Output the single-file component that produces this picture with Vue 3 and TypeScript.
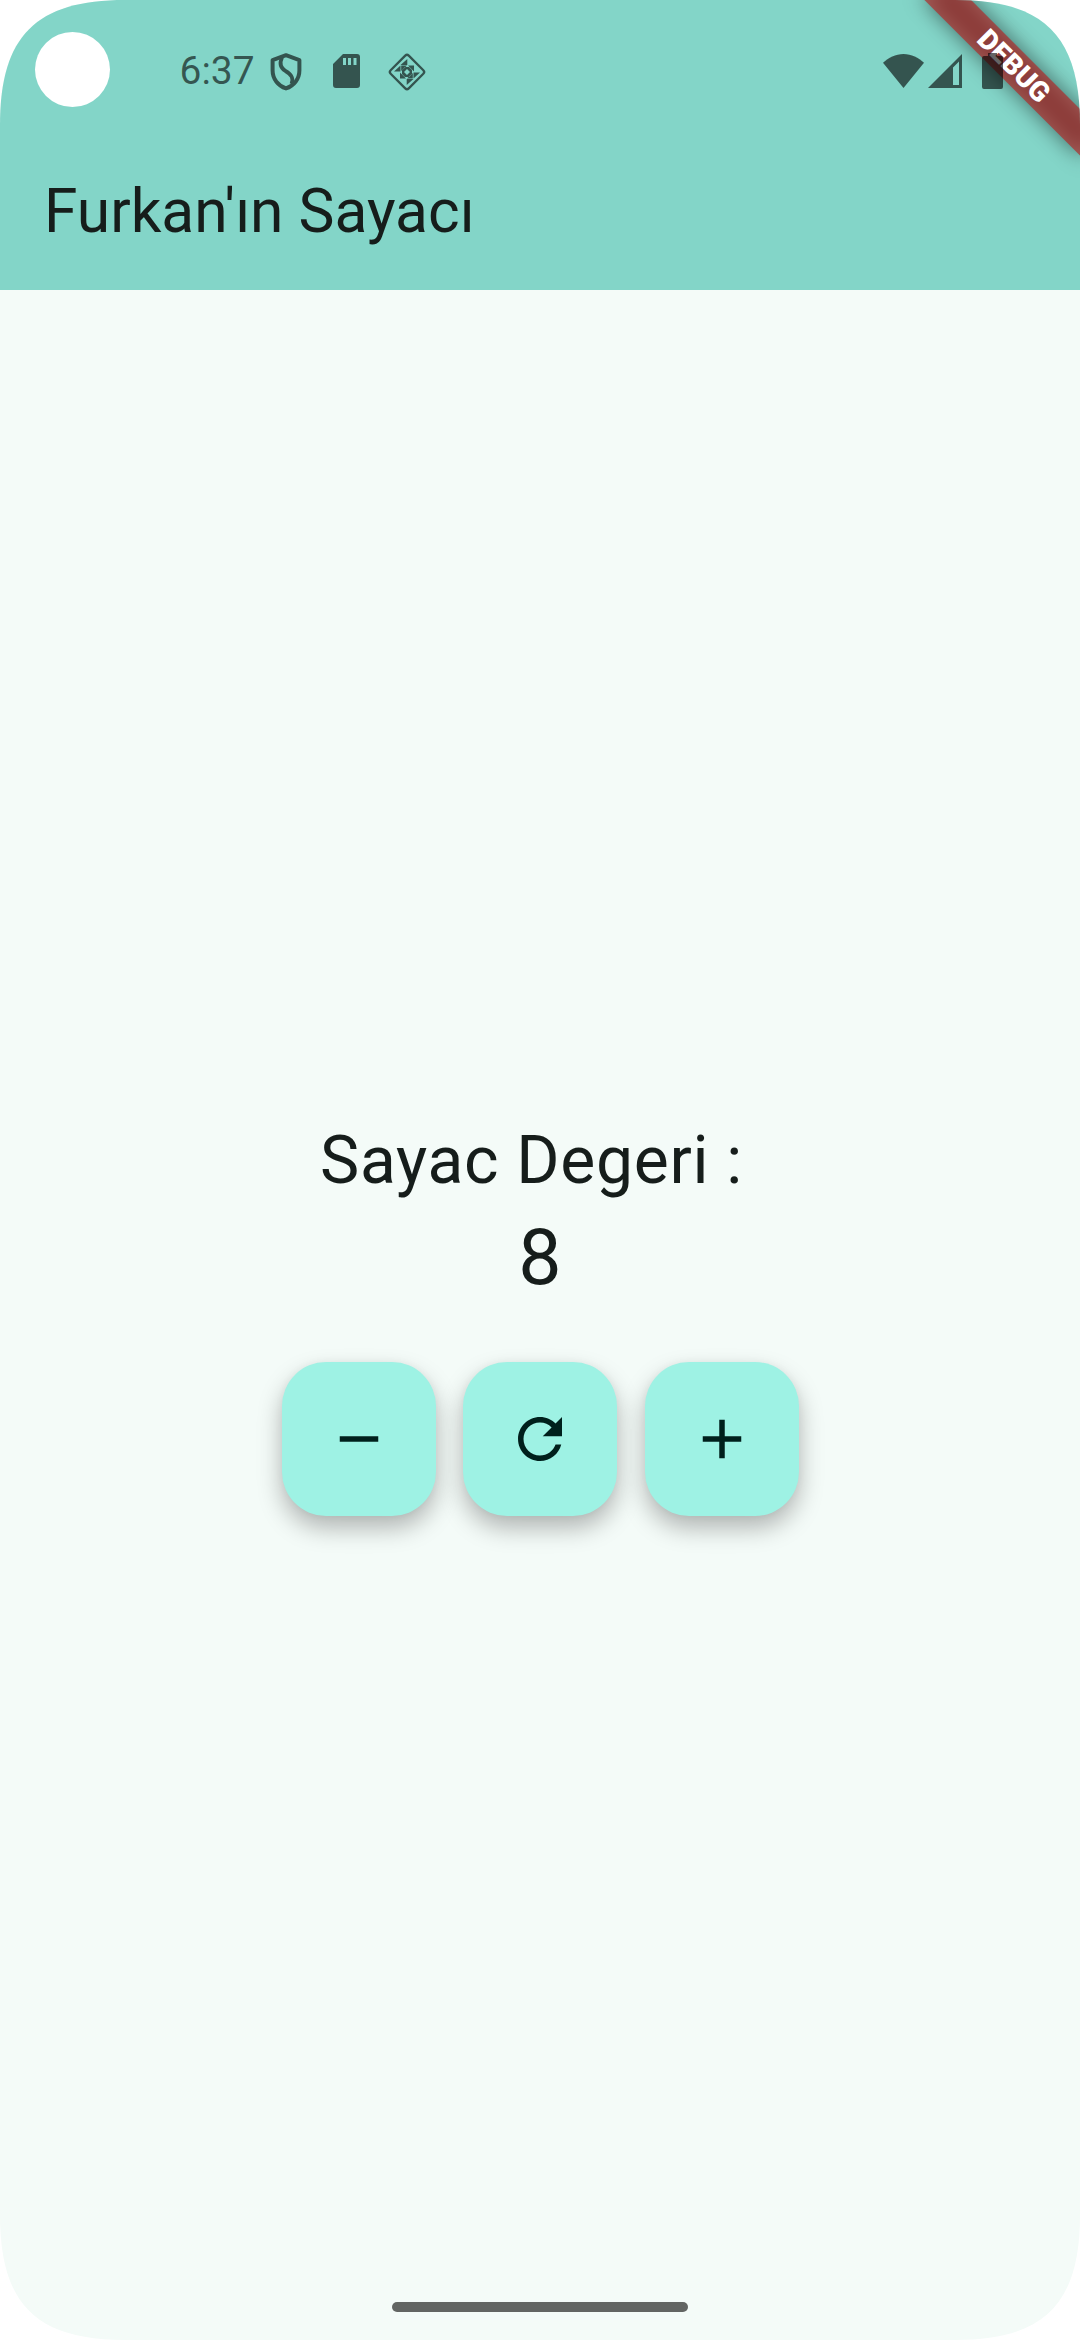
<script setup lang="ts">
import { ref } from 'vue'

const title = "Furkan'ın Sayacı"
const label = 'Sayac Degeri : '
const clock = '6:37'
const count = ref<number>(8)

interface Action {
  name: string
  path: string
  run: () => void
}

const actions: Action[] = [
  { name: 'Azalt', path: 'M19 13H5v-2h14v2z', run: () => { count.value-- } },
  {
    name: 'Sıfırla',
    path: 'M17.65 6.35C16.2 4.9 14.21 4 12 4c-4.42 0-7.99 3.58-7.99 8s3.57 8 7.99 8c3.73 0 6.84-2.55 7.73-6h-2.08c-.82 2.33-3.04 4-5.65 4-3.31 0-6-2.69-6-6s2.69-6 6-6c1.66 0 3.14.69 4.22 1.78L13 11h7V4l-2.35 2.35z',
    run: () => { count.value = 0 },
  },
  { name: 'Artır', path: 'M19 13h-6v6h-2v-6H5v-2h6V5h2v6h6v2z', run: () => { count.value++ } },
]
</script>

<template>
  <div class="screen">
    <header class="app-bar">
      <div class="status-bar">
        <span class="camera"></span>
        <span class="clock">{{ clock }}</span>
        <svg class="shield" width="32" height="38" viewBox="0 0 32 38">
          <path d="M16 2.2 L2.6 7.2 V17.5 C2.6 26 8.2 32.8 16 35.4 C23.8 32.8 29.4 26 29.4 17.5 V7.2 Z" fill="none" stroke="#000" stroke-width="4" stroke-linejoin="round" />
          <path d="M12 4.500 C9.2 10.500 10.500 14.8 15.500 18 C21.500 21.500 24 25 21.500 31" fill="none" stroke="#000" stroke-width="3.8" />
        </svg>
        <svg class="sd" width="27" height="34" viewBox="0 0 27 34">
          <path fill-rule="evenodd" d="M10 0H24Q27 0 27 3V31Q27 34 24 34H3Q0 34 0 31V10ZM10 4V11H13V4ZM15 4V11H18V4ZM20.500 4V11H23.500V4Z" />
        </svg>
        <svg class="diamond" width="40" height="40" viewBox="-20 -20 40 40">
          <rect x="-12.800" y="-12.800" width="25.600" height="25.600" rx="2.500" transform="rotate(45)" fill="none" stroke="#000" stroke-width="2.300" />
          <path fill-rule="evenodd" d="M0.300 -13V-7H-6.500ZM-6.500 -6.500V-0.500H-13ZM-5.800 -6.500H0L-5.800 -1ZM1 -6.500H7V-0.500ZM-0.300 13V7H6.500ZM6.500 6.500V0.500H13ZM5.800 6.500H0L5.800 1ZM-1 6.500H-7V0.500ZM-2 -5H2L5 -2V2L2 5H-2L-5 2V-2ZM0 -3L-3 0L0 3L3 0Z" />
        </svg>
        <span class="spacer"></span>
        <svg class="wifi" width="41" height="34" viewBox="0 0 41 34">
          <path d="M20.500 34L0 8.800C5.500 3.500 12.500 0 20.500 0S35.500 3.500 41 8.800Z" />
        </svg>
        <svg class="signal" width="34" height="34" viewBox="0 0 34 34">
          <path fill-rule="evenodd" d="M34 0V34H0ZM31 7.500L25 13.500V31H31Z" />
        </svg>
        <svg class="battery" width="21" height="36" viewBox="0 0 21 36">
          <path d="M6 0H15V3H19Q21 3 21 5V34Q21 36 19 36H2Q0 36 0 34V5Q0 3 2 3H6Z" />
        </svg>
      </div>
      <h1 class="title">{{ title }}</h1>
    </header>

    <main class="body">
      <p class="label">{{ label }}</p>
      <p class="count">{{ count }}</p>
      <div class="actions">
        <button v-for="action in actions" :key="action.name" class="fab" :aria-label="action.name" @click="action.run">
          <svg width="66" height="66" viewBox="0 0 24 24"><path :d="action.path" /></svg>
        </button>
      </div>
    </main>

    <div class="banner">
      <span class="banner-shadow"></span>
      <span class="banner-strip">DEBUG</span>
    </div>
    <div class="home-pill"></div>
  </div>
</template>

<style>
body {
  margin: 0;
  background: #fff;
}
</style>

<style scoped>
.screen {
  position: relative;
  display: flex;
  flex-direction: column;
  width: 1080px;
  height: 2340px;
  overflow: hidden;
  background: #f4fbf8;
  color: #161d1b;
  font-family: Roboto, "Noto Sans", sans-serif;
  clip-path: path("M0 125C0 36 36 0 125 0H955C1044 0 1080 36 1080 125V2215C1080 2304 1044 2340 955 2340H125C36 2340 0 2304 0 2215Z");
}
.app-bar {
  height: 290px;
  flex: none;
  background: #83d5c8;
}
.status-bar {
  position: relative;
  z-index: 2;
  display: flex;
  align-items: flex-start;
  box-sizing: border-box;
  height: 136px;
  padding: 32px 77px 0 35px;
}
.status-bar svg {
  flex: none;
  opacity: 0.6;
}
.camera {
  width: 75px;
  height: 75px;
  border-radius: 50%;
  background: #fff;
}
.clock {
  width: 90px;
  margin: 16px 0 0 69.500px;
  font-size: 39px;
  line-height: 46px;
  color: rgba(0, 0, 0, 0.6);
}
.shield { margin: 20.500px 0 0 0; }
.sd { margin: 22px 0 0 31.500px; }
.diamond { margin: 19.500px 0 0 27px; }
.spacer { flex: 1; }
.wifi { margin: 21.500px 4px 0 0; }
.signal { margin: 22px 20px 0 0; }
.battery { margin: 20.500px 0 0; }
.title {
  margin: 0;
  padding-left: 44px;
  font-size: 60.500px;
  font-weight: 400;
  line-height: 152px;
}
.body {
  display: flex;
  flex: 1;
  flex-direction: column;
  align-items: center;
  justify-content: center;
}
.label,
.count {
  margin: 0;
  white-space: pre;
}
.label {
  font-size: 66px;
  line-height: 94.400px;
  letter-spacing: 0.6875px;
}
.count {
  padding-top: 1px;
  font-size: 77px;
  line-height: 99.300px;
}
.actions {
  display: flex;
  gap: 27.500px;
  margin-top: 54px;
}
.fab {
  display: flex;
  align-items: center;
  justify-content: center;
  width: 154px;
  height: 154px;
  padding: 0;
  border: 0;
  border-radius: 44px;
  background: #9ef2e4;
  color: #00201c;
  box-shadow: 0 12px 24px rgba(0, 0, 0, 0.28), 0 0 8px rgba(0, 0, 0, 0.04);
}
.fab svg { fill: currentColor; }
.banner {
  position: absolute;
  top: 0;
  left: 1080px;
  z-index: 1;
  width: 0;
  height: 0;
  transform: rotate(45deg);
}
.banner-shadow,
.banner-strip {
  position: absolute;
  top: 77px;
  left: -110px;
  width: 220px;
  height: 33px;
}
.banner-shadow {
  background: rgba(0, 0, 0, 0.5);
  filter: blur(10.900px);
}
.banner-strip {
  background: rgba(183, 28, 28, 0.627);
  color: #fff;
  font-size: 28.050px;
  font-weight: 900;
  line-height: 33px;
  text-align: center;
}
.home-pill {
  position: absolute;
  top: 2302px;
  left: 392px;
  width: 296px;
  height: 10px;
  border-radius: 5px;
  background: #626563;
}
</style>
